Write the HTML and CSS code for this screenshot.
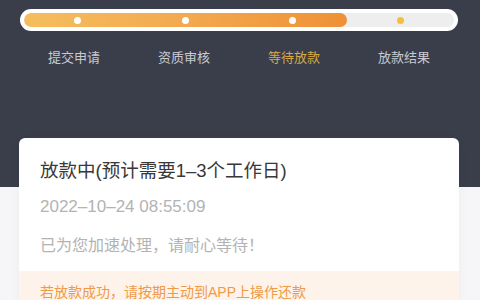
FILE: index.html
```html
<!DOCTYPE html>
<html lang="zh-CN">
<head>
<meta charset="utf-8">
<link rel="stylesheet" href="styles.css">
</head>
<body>
<div class="header">
  <div class="progress">
    <div class="track">
      <div class="fill" style="width:75%"></div>
      <div class="dots">
        <span class="dot"></span>
        <span class="dot"></span>
        <span class="dot"></span>
        <span class="dot dot-next"></span>
      </div>
    </div>
  </div>
  <div class="steps">
    <span class="step">提交申请</span>
    <span class="step">资质审核</span>
    <span class="step active">等待放款</span>
    <span class="step">放款结果</span>
  </div>
</div>
<div class="card">
  <div class="card-body">
    <div class="title">放款中(预计需要1–3个工作日)</div>
    <div class="date">2022–10–24 08:55:09</div>
    <div class="desc">已为您加速处理，请耐心等待！</div>
  </div>
  <div class="notice">若放款成功，请按期主动到APP上操作还款</div>
</div>
</body>
</html>
```
FILE: styles.css
```css
* { box-sizing: border-box; }
html, body {
  margin: 0;
  padding: 0;
  background: #f6f6f8;
  font-family: "Liberation Sans", "Noto Sans CJK SC", sans-serif;
  overflow: hidden;
}
.header {
  background: #3a3e4b;
  height: 187px;
  padding-top: 9px;
}
.progress {
  margin-left: 20px;
  width: 438px;
  height: 22px;
  padding: 4px;
  background: #ffffff;
  border-radius: 11px;
}
.track {
  position: relative;
  height: 14px;
  border-radius: 7px;
  background: #eeeeee;
  overflow: hidden;
}
.fill {
  height: 100%;
  border-radius: 7px;
  background: linear-gradient(90deg, #f5bd5d 0%, #f3a94f 50%, #ef9136 100%);
}
.dots {
  position: absolute;
  inset: 0;
  display: grid;
  grid-template-columns: repeat(4, 1fr);
  align-items: center;
  justify-items: center;
}
.dot {
  width: 7px;
  height: 7px;
  border-radius: 50%;
  background: #ffffff;
}
.dot-next { background: #f6be3e; }
.steps {
  margin-left: 19px;
  width: 440px;
  margin-top: 18px;
  display: grid;
  grid-template-columns: repeat(4, 1fr);
  justify-items: center;
}
.step {
  font-size: 13px;
  line-height: 18px;
  color: #c9cad0;
}
.step.active { color: #d9a843; }
.card {
  margin: -49px 0 0 19px;
  width: 440px;
  background: #ffffff;
  border-radius: 6px 6px 0 0;
  box-shadow: 0 2px 10px rgba(0, 0, 0, 0.05);
  overflow: hidden;
}
.card-body {
  padding: 21px 21px 14px;
}
.title {
  font-size: 18.5px;
  line-height: 24px;
  color: #383838;
}
.date {
  margin-top: 13px;
  font-size: 17px;
  line-height: 22px;
  color: #b3b3b3;
}
.desc {
  margin-top: 17px;
  font-size: 16px;
  line-height: 22px;
  color: #b3b3b3;
}
.notice {
  background: #fdf3ea;
  padding: 11px 21px 10px;
  font-size: 14px;
  line-height: 20px;
  color: #ef9a47;
}
```
